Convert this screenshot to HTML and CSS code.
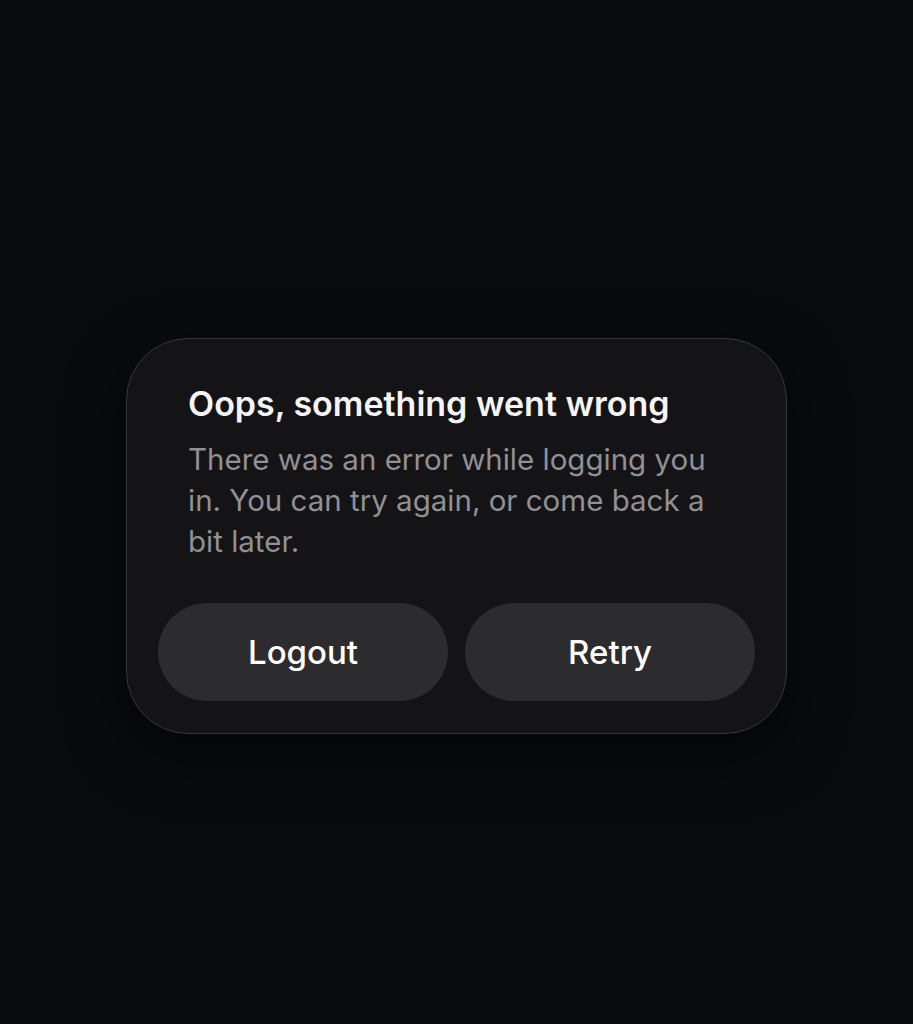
FILE: index.html
```html
<!DOCTYPE html>
<html>
<head>
<meta charset="utf-8">
<link rel="stylesheet" href="styles.css">
</head>
<body>
<main class="screen">
  <section class="card">
    <div class="copy">
      <h1 class="title">Oops, something went wrong</h1>
      <p class="message">There was an error while logging you in. You can try again, or come back a bit later.</p>
    </div>
    <div class="actions">
      <button class="btn">Logout</button>
      <button class="btn">Retry</button>
    </div>
  </section>
</main>
</body>
</html>
```
FILE: styles.css
```css
html, body {
  margin: 0;
  padding: 0;
  background: #0a0b0d;
}
body {
  font-family: Inter, "Noto Sans", "Liberation Sans", sans-serif;
  -webkit-font-smoothing: antialiased;
}
.screen {
  width: 913px;
  height: 1024px;
  display: flex;
  justify-content: center;
  padding-top: 338px;
  box-sizing: border-box;
}
.card {
  width: 661px;
  height: 396px;
  box-sizing: border-box;
  background: #141416;
  border: 1.5px solid #37373b;
  border-radius: 62px;
  padding: 0 31px 32px;
  display: flex;
  flex-direction: column;
  box-shadow: 0 20px 60px rgba(0,0,0,0.6);
}
.copy {
  padding: 44px 30px 0;
}
.title {
  margin: 0;
  font-size: 34px;
  font-weight: 600;
  color: #f5f5f7;
  line-height: 42px;
  letter-spacing: 0;
}
.message {
  margin: 14px 0 0;
  font-size: 29.5px;
  font-weight: 400;
  color: #909095;
  line-height: 41px;
  width: 545px;
  letter-spacing: 0;
}
.actions {
  margin-top: auto;
  display: flex;
  gap: 17px;
}
.btn {
  flex: 1;
  height: 98px;
  border: none;
  border-radius: 49px;
  background: #2c2c2f;
  color: #ffffff;
  font-family: inherit;
  font-size: 33px;
  font-weight: 500;
  padding: 0;
}
```
